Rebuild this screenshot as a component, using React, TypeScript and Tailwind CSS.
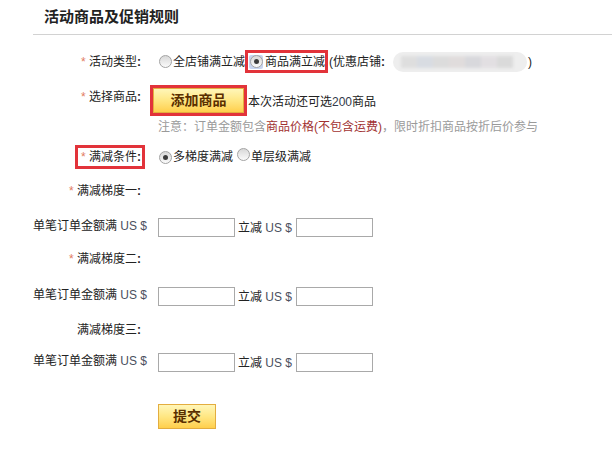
import React from "react";

const Star = () => <span className="text-[#e27b5f] font-['Liberation_Sans',sans-serif]">* </span>;

function Radio({ checked = false, focus = false }: { checked?: boolean; focus?: boolean }) {
  return (
    <span className={`inline-flex h-[14px] w-[14px] shrink-0 items-center justify-center rounded-[2px] ${focus ? "bg-[#c7d4f0]" : ""}`}>
      <span className="flex h-[13px] w-[13px] items-center justify-center rounded-full border border-[#a3a3a3] bg-gradient-to-b from-[#d8d8d8] to-[#fbfbfb]">
        {checked && <span className="h-[5px] w-[5px] rounded-full bg-[#3c3c3c]" />}
      </span>
    </span>
  );
}

function AmountRow({ mt }: { mt: string }) {
  return (
    <div className={`flex h-[19px] items-start ${mt}`}>
      <div className="w-[147px] text-right leading-[16px] text-[#222]">
        单笔订单金额满 <span className="text-[#4b5060] font-['Liberation_Sans',sans-serif]">US $</span>
      </div>
      <input className="ml-[11px] h-[19px] w-[77px] border border-[#a9a9a9] bg-white outline-none" />
      <div className="ml-[3px] self-center leading-[16px] text-[#222]">
        立减 <span className="text-[#4b5060] font-['Liberation_Sans',sans-serif]">US $</span>
      </div>
      <input className="ml-[4px] h-[19px] w-[77px] border border-[#a9a9a9] bg-white outline-none" />
    </div>
  );
}

function YellowButton({ label, className }: { label: string; className: string }) {
  return (
    <button className={`flex items-center justify-center border border-[#e3ad3f] bg-gradient-to-b from-[#fff6b8] via-[#ffe783] to-[#ffcf4a] text-[14px] font-bold text-[#5a2f00] ${className}`}>
      {label}
    </button>
  );
}

export default function App() {
  return (
    <div className="min-h-[449px] w-[612px] bg-white text-[12px] text-[#222] font-['Liberation_Sans','Noto_Sans_CJK_SC',sans-serif]">
      {/* header */}
      <div className="h-[34px] pl-[44px] pt-[9px] text-[15px] font-bold leading-[16px] text-[#222]">活动商品及促销规则</div>
      <div className="ml-[33px] h-px bg-[#d2d2d2]" />

      {/* 活动类型 */}
      <div className="mt-[15px] flex h-[23px] items-center">
        <div className="w-[141px] text-right leading-[16px]">
          <Star />活动类型<b>:</b>
        </div>
        <div className="ml-[17px] flex items-center">
          <Radio />
          <span className="ml-[1px] leading-[16px]">全店铺满立减</span>
          <span className="flex h-[23px] items-center border-[3px] border-[#e2333a] pl-[1px]">
            <Radio checked focus />
            <span className="ml-[2px] leading-[16px]">商品满立减</span>
          </span>
          <span className="ml-[1px] leading-[16px]">(优惠店铺<b>:</b></span>
          <div className="ml-[8px] flex h-[20px] w-[134px] overflow-hidden rounded-full bg-[#eeeeee]">
            <div className="flex h-full w-full items-center gap-0 px-[8px] blur-[1.5px]">
              <div className="h-[12px] w-[16px] bg-[#dedede]" />
              <div className="h-[12px] w-[16px] bg-[#d8dce2]" />
              <div className="h-[12px] w-[16px] bg-[#dcdcdc]" />
              <div className="h-[12px] w-[16px] bg-[#e0dcdc]" />
              <div className="h-[12px] w-[16px] bg-[#d8d8dc]" />
              <div className="h-[12px] w-[16px] bg-[#e2dfe2]" />
              <div className="h-[12px] w-[16px] bg-[#dadada]" />
            </div>
          </div>
          <span className="ml-[1px] leading-[16px]">)</span>
        </div>
      </div>

      {/* 选择商品 */}
      <div className="mt-[12px] flex h-[31px] items-start">
        <div className="w-[141px] pt-[4px] text-right leading-[16px]">
          <Star />选择商品<b>:</b>
        </div>
        <div className="ml-[9px] flex h-[31px] items-center">
          <div className="border-[3px] border-[#e2333a]">
            <YellowButton label="添加商品" className="h-[25px] w-[91px]" />
          </div>
          <span className="ml-[1px] pt-[3px] leading-[16px]">
            本次活动还可选<span className="font-['Liberation_Sans',sans-serif] text-[#333a4a]">200</span>商品
          </span>
        </div>
      </div>

      {/* note */}
      <div className="mt-[4px] h-[14px] pl-[158px] leading-[14px] text-[#9a9a9a]">
        注意：订单金额包含<span className="text-[#a23232]">商品价格(不包含运费)</span>，限时折扣商品按折后价参与
      </div>

      {/* 满减条件 */}
      <div className="mt-[11px] flex h-[24px] items-center">
        <div className="flex w-[145px] justify-end">
          <div className="flex h-[24px] items-center border-[3px] border-[#e2333a] pl-[3px] pr-[1px]">
            <span className="leading-[16px]">
              <Star />满减条件<b>:</b>
            </span>
          </div>
        </div>
        <div className="ml-[13px] flex items-center">
          <Radio checked />
          <span className="ml-[1px] leading-[16px]">多梯度满减</span>
          <span className="ml-[3px]"><Radio /></span>
          <span className="ml-[1px] leading-[16px]">单层级满减</span>
        </div>
      </div>

      {/* 梯度一 */}
      <div className="mt-[14px] h-[16px] w-[141px] text-right leading-[16px]">
        <Star />满减梯度一<b>:</b>
      </div>
      <AmountRow mt="mt-[19px]" />

      {/* 梯度二 */}
      <div className="mt-[14px] h-[16px] w-[141px] text-right leading-[16px]">
        <Star />满减梯度二<b>:</b>
      </div>
      <AmountRow mt="mt-[20px]" />

      {/* 梯度三 */}
      <div className="mt-[16px] h-[16px] w-[141px] text-right leading-[16px]">
        满减梯度三<b>:</b>
      </div>
      <AmountRow mt="mt-[15px]" />

      <div className="mt-[32px] pl-[158px]">
        <YellowButton label="提交" className="h-[25px] w-[58px]" />
      </div>
    </div>
  );
}
